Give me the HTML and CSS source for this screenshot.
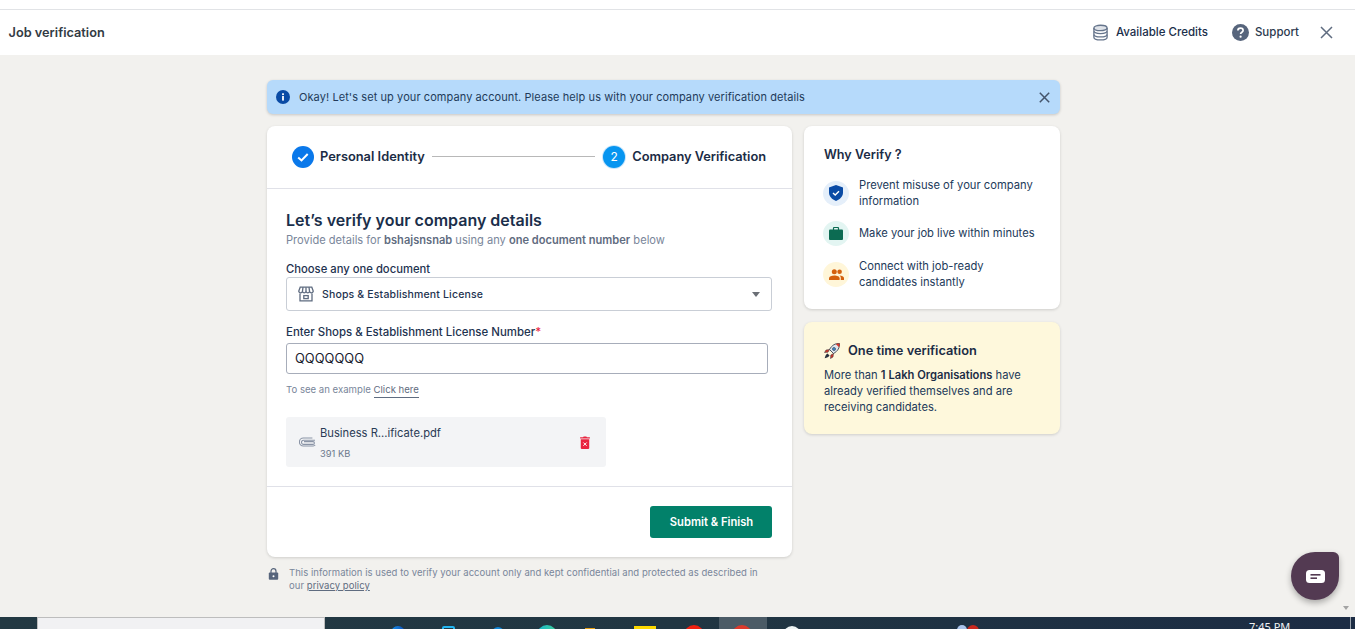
FILE: index.html
```html
<!DOCTYPE html>
<html lang="en">
<head>
<meta charset="utf-8">
<title>Job verification</title>
<link rel="stylesheet" href="styles.css">
</head>
<body>
<div class="page">
  <div class="top-strip"></div>
  <header class="header">
    <div class="header-title">Job verification</div>
    <div class="header-actions">
      <div class="header-action credits">
        <svg width="17" height="17" viewBox="0 0 18 18" fill="none" stroke="#66758c" stroke-width="1.4"><ellipse cx="9" cy="4.2" rx="7" ry="2.9" fill="#dfe3e9"/><path d="M2 4.2v3c0 1.6 3.1 2.9 7 2.9s7-1.3 7-2.9v-3"/><path d="M2 7.6v3.2c0 1.6 3.1 2.9 7 2.9s7-1.3 7-2.9V7.6"/><path d="M2 11v3c0 1.6 3.1 2.9 7 2.9s7-1.3 7-2.9v-3"/></svg>
        <span>Available Credits</span>
      </div>
      <div class="header-action support">
        <svg width="17" height="17" viewBox="0 0 17 17"><circle cx="8.5" cy="8.5" r="8.5" fill="#57657c"/><path d="M5.9 6.5c0-1.500 1.200-2.400 2.600-2.400s2.600.9 2.600 2.300c0 1.900-2.500 1.800-2.500 3.700" fill="none" stroke="#fff" stroke-width="1.7"/><circle cx="8.6" cy="12.7" r="1.100" fill="#fff"/></svg>
        <span>Support</span>
      </div>
      <svg class="header-close" width="13" height="13" viewBox="0 0 13 13" stroke="#5f6c80" stroke-width="1.5"><path d="M1 1l11 11M12 1L1 12"/></svg>
    </div>
  </header>

  <main class="main">
    <div class="alert">
      <svg width="14" height="14" viewBox="0 0 14 14"><circle cx="7" cy="7" r="7" fill="#0a4ba5"/><rect x="6.100" y="6" width="1.800" height="4.600" fill="#fff"/><rect x="6.100" y="3.300" width="1.800" height="1.800" fill="#fff"/></svg>
      <span class="alert-text">Okay! Let's set up your company account. Please help us with your company verification details</span>
      <svg class="alert-close" width="11" height="11" viewBox="0 0 11 11" stroke="#44546b" stroke-width="1.5"><path d="M.8.8l9.400 9.400M10.200.8L.8 10.200"/></svg>
    </div>

    <div class="columns">
      <div class="left-column">
        <section class="card form-card">
          <div class="stepper">
            <svg width="22" height="22" viewBox="0 0 22 22"><circle cx="11" cy="11" r="11" fill="#0a78ea"/><path d="M6.200 11.400l3.300 3 6.200-6.400" fill="none" stroke="#fff" stroke-width="2"/></svg>
            <span class="step-label first">Personal Identity</span>
            <span class="step-line"></span>
            <span class="step-number">2</span>
            <span class="step-label second">Company Verification</span>
          </div>

          <div class="form-body">
            <h1 class="form-title">Let’s verify your company details</h1>
            <p class="form-sub">Provide details for <b>bshajsnsnab</b> using any <b>one document number</b> below</p>

            <label class="field-label choose-label">Choose any one document</label>
            <div class="select">
              <svg width="16" height="16" viewBox="0 0 16 16" fill="none" stroke="#5f6c80" stroke-width="1.300"><path d="M2.200 1.200h11.600l1.500 4a2 2 0 0 1-3.700.6 2 2 0 0 1-3.600 0 2 2 0 0 1-3.600 0 2 2 0 0 1-3.700-.6z"/><path d="M5 1.200l-.6 4.600M8 1.200v4.600M11 1.200l.6 4.600"/><path d="M2 7.400v7.400h12V7.400"/><rect x="5.800" y="9.600" width="4.400" height="3"/></svg>
              <span class="select-value">Shops &amp; Establishment License</span>
              <span class="select-caret"></span>
            </div>

            <label class="field-label number-label">Enter Shops &amp; Establishment License Number<span class="required">*</span></label>
            <div class="input">QQQQQQQ</div>
            <p class="hint">To see an example <a class="hint-link">Click here</a></p>

            <div class="file">
              <svg width="17" height="10" viewBox="0 0 17 10" fill="none" stroke="#8a94a6" stroke-width="1.100"><path d="M16 3.200H4.600a2.100 2.100 0 0 0 0 4.200H14a1.400 1.400 0 0 0 0-2.800H5"/><path d="M13.400 1H4.400a3.900 3.900 0 0 0 0 8h9.800a2.800 2.800 0 0 0 2-1"/></svg>
              <div class="file-info">
                <div class="file-name">Business R...ificate.pdf</div>
                <div class="file-size">391 KB</div>
              </div>
              <svg class="file-delete" width="10" height="13" viewBox="0 0 9 12"><path d="M0 1.200h2.700L3.300.4h2.400l.6.8H9v1H0z" fill="#e9243f"/><path d="M.6 3h7.800v8a1 1 0 0 1-1 1H1.600a1 1 0 0 1-1-1z" fill="#e9243f"/><path d="M3 6l3 3M6 6L3 9" stroke="#fff" stroke-width=".9"/></svg>
            </div>
          </div>

          <div class="form-footer">
            <button class="submit" type="button">Submit &amp; Finish</button>
          </div>
        </section>

        <div class="privacy">
          <svg width="11" height="12" viewBox="0 0 11 12"><path d="M3 5V3.200a2.500 2.500 0 0 1 5 0V5" fill="none" stroke="#57657c" stroke-width="1.200"/><rect x=".8" y="4.600" width="9.400" height="7.200" rx="1" fill="#57657c"/><circle cx="5.500" cy="8.200" r="1" fill="#fff"/></svg>
          <p>This information is used to verify your account only and kept confidential and protected as described in our <a>privacy policy</a></p>
        </div>
      </div>

      <aside class="right-column">
        <section class="card why-card">
          <h2 class="why-title">Why Verify ?</h2>
          <div class="why-row">
            <span class="why-icon blue"><svg width="14" height="16" viewBox="0 0 14 16"><path d="M7 0l7 2.600v5c0 3.800-3 7-7 8.400-4-1.400-7-4.600-7-8.400v-5z" fill="#0a4ba5"/><path d="M4 8l2.200 2.100L10 6.200" fill="none" stroke="#fff" stroke-width="1.400"/></svg></span>
            <span>Prevent misuse of your company information</span>
          </div>
          <div class="why-row">
            <span class="why-icon green"><svg width="14" height="13" viewBox="0 0 14 13"><path d="M4.500 3V1.300A1 1 0 0 1 5.500.3h3a1 1 0 0 1 1 1V3" fill="none" stroke="#0c6b52" stroke-width="1.200"/><rect y="2.600" width="14" height="10.400" rx="1" fill="#0c6b52"/></svg></span>
            <span>Make your job live within minutes</span>
          </div>
          <div class="why-row">
            <span class="why-icon yellow"><svg width="15" height="11" viewBox="0 0 15 11" fill="#d4600e"><circle cx="5.300" cy="2.700" r="2.500"/><path d="M0 11V9.200C0 7.400 2.600 6.400 5.300 6.400s5.300 1 5.300 2.800V11z"/><circle cx="10.600" cy="2.700" r="2.300"/><path d="M11.800 11V9c0-1-.5-1.900-1.300-2.500 2.200 0 4.500.9 4.500 2.600V11z"/></svg></span>
            <span>Connect with job-ready candidates instantly</span>
          </div>
        </section>

        <section class="card once-card">
          <h2 class="once-title">
            <svg width="16" height="16" viewBox="0 0 16 16"><path d="M15.500.5c-4-.3-7.500 1.500-10 6l4 4c4.500-2.500 6.300-6 6-10z" fill="#dfe6ee" stroke="#26303d" stroke-width=".8"/><path d="M15.500.5c-1.500-.2-2.700 0-3.800.5l3.300 3.300c.5-1.100.7-2.300.5-3.800z" fill="#d8392b"/><circle cx="10" cy="6" r="1.500" fill="#3d8fd6" stroke="#26303d" stroke-width=".6"/><path d="M5.500 6.500L2 7l-1.500 2.500 3.500-.3zM9.500 10.500L9 14l-2.500 1.500.3-3.500z" fill="#d8392b" stroke="#26303d" stroke-width=".5"/><path d="M3.500 10.500c-1.500.8-2.300 2.500-2.800 4.800 2.300-.5 4-1.300 4.800-2.800z" fill="#26303d"/></svg>
            <span>One time verification</span>
          </h2>
          <p class="once-text">More than <b>1 Lakh Organisations</b> have already verified themselves and are receiving candidates.</p>
        </section>
      </aside>
    </div>
  </main>

  <button class="chat" type="button" aria-label="Chat">
    <svg width="19" height="13" viewBox="0 0 19 13"><rect width="19" height="13" rx="3.500" fill="#fff"/><rect x="4.500" y="4" width="10" height="1.600" fill="#533a52"/><rect x="4.500" y="7.400" width="6.500" height="1.600" fill="#533a52"/></svg>
  </button>
  <span class="scroll-arrow"></span>

  <footer class="taskbar">
    <span class="task-search"></span>
    <span class="task-icon t-edge"></span>
    <span class="task-icon t-store"></span>
    <span class="task-icon t-blue"></span>
    <span class="task-icon t-teal"></span>
    <span class="task-icon t-orange"></span>
    <span class="task-icon t-yellow"></span>
    <span class="task-icon t-red"></span>
    <span class="task-active"><span class="task-icon t-chrome"></span></span>
    <span class="task-icon t-white"></span>
    <span class="task-icon t-people"></span>
    <span class="task-clock">7:45 PM</span>
    <span class="task-edge"></span>
  </footer>
</div>
</body>
</html>
```

FILE: styles.css
```css
* { box-sizing: border-box; }
html, body { margin: 0; padding: 0; height: 100%; overflow: hidden; }
body { font-family: Inter, "Noto Sans", "Liberation Sans", sans-serif; color: #1b2c45; background: #f2f1ee; }
p, h1, h2 { margin: 0; }

.page { position: relative; width: 1355px; height: 629px; display: flex; flex-direction: column; overflow: hidden; }

.top-strip { height: 10px; background: #fff; border-bottom: 1px solid #e1e3e6; flex: none; }

.header { height: 45px; flex: none; background: #fff; display: flex; align-items: center; justify-content: space-between; padding: 0 22px 1px 8.5px; }
.header-title { font-size: 12.75px; font-weight: 600; color: #333b44; }
.header-actions { display: flex; align-items: center; }
.header-action { display: flex; align-items: center; font-size: 11.5px; font-weight: 500; color: #1b2f4b; }
.credits { gap: 7px; margin-right: 24px; }
.support { gap: 6px; margin-right: 21px; color: #2c3a4e; }

.main { flex: 1; min-height: 0; padding: 25px 0 0 267px; }

.alert { width: 793px; height: 34px; background: #b6dafb; border-radius: 6px; display: flex; align-items: center; padding: 0 10px 0 9px; box-shadow: 0 1px 3px rgba(0,0,0,.18); font-size: 11px; color: #223a5a; }
.alert-text { margin-left: 9px; flex: 1; letter-spacing: .08px; }

.columns { display: flex; align-items: flex-start; gap: 12px; margin-top: 12px; }
.left-column { width: 525px; }
.right-column { width: 256px; display: flex; flex-direction: column; gap: 13px; }

.card { background: #fff; border-radius: 8px; box-shadow: 0 1px 3px rgba(0,0,0,.15); }

.form-card { height: 431px; display: flex; flex-direction: column; }
.stepper { height: 63px; flex: none; border-bottom: 1px solid #e0e1e8; display: flex; align-items: center; padding: 0 26px 1px 25px; }
.step-label { font-size: 12.85px; font-weight: 600; color: #1b2c45; white-space: nowrap; }
.step-label.first { margin-left: 6px; }
.step-label.second { margin-left: 7px; letter-spacing: -.04px; }
.step-line { flex: 1; height: 1px; background: #b8b8b8; margin: 0 8px 0 7px; }
.step-number { width: 22px; height: 22px; border-radius: 50%; background: #0795f0; color: #fff; font-size: 12px; display: flex; align-items: center; justify-content: center; box-shadow: 0 0 0 1px #c8e5fb; }

.form-body { flex: 1; padding: 21px 20px 0 19px; border-bottom: 1px solid #e0e1e8; }
.form-title { font-size: 16px; line-height: 20px; font-weight: 600; color: #1b2f4b; }
.form-sub { font-size: 11.1px; line-height: 14px; margin-top: 3px; color: #79869a; }
.form-sub b { font-weight: 600; color: #5f6c80; }

.field-label { display: block; font-size: 11.45px; line-height: 14px; color: #1e3350; font-weight: 500; }
.choose-label { font-size: 11.25px; margin-top: 15px; }
.select { height: 34px; border: 1px solid #c9ced6; border-radius: 3px; display: flex; align-items: center; padding: 0 11px; margin-top: 1px; }
.select-value { margin-left: 8px; flex: 1; font-size: 10.5px; font-weight: 500; color: #1e3350; letter-spacing: .015em; }
.select-caret { width: 0; height: 0; border-left: 4.5px solid transparent; border-right: 4.5px solid transparent; border-top: 5px solid #6b6f76; }

.number-label { margin-top: 14px; }
.required { color: #e9243f; }
.input { width: 482px; height: 31px; border: 1px solid #a7adba; border-radius: 3px; margin-top: 4px; padding: 0 8px; display: flex; align-items: center; font-size: 12.9px; font-weight: 400; color: #17202e; }
.hint { font-size: 9.6px; line-height: 13px; color: #79869a; margin-top: 9px; }
.hint-link { color: #5f6c80; border-bottom: 1px solid #5f6c80; padding-bottom: 2px; }

.file { width: 320px; height: 50px; background: #f3f4f6; border-radius: 3px; margin-top: 21px; display: flex; align-items: center; padding: 0 16px 0 13px; }
.file-info { margin-left: 4px; flex: 1; padding-top: 2px; }
.file-name { font-size: 11.2px; line-height: 14px; color: #2a3b55; }
.file-size { font-size: 9.3px; line-height: 12px; margin-top: 8px; color: #6c788c; }

.form-footer { height: 70px; flex: none; display: flex; justify-content: flex-end; align-items: flex-start; padding: 19px 20px 0 0; }
.submit { width: 122px; height: 32px; border: 0; border-radius: 3px; background: #02816a; color: #fff; font-family: inherit; font-size: 11.2px; font-weight: 600; padding: 0 0 0 1px; }

.privacy { display: flex; gap: 10px; margin-top: 9px; padding-left: 1px; width: 500px; }
.privacy svg { flex: none; margin-top: 2px; }
.privacy p { font-size: 9.5px; line-height: 13px; color: #79869a; letter-spacing: .005em; }
.privacy a { color: #5f6c80; text-decoration: underline; }

.why-card { height: 183px; padding: 21px 22px 0 19px; font-size: 11.2px; line-height: 16px; color: #223a5a; }
.why-title { font-size: 12.6px; line-height: 16px; font-weight: 600; color: #1b2c45; margin-left: 1px; }
.why-row { display: flex; align-items: center; gap: 10px; min-height: 32px; margin-top: 8px; }
.why-title + .why-row { margin-top: 14px; }
.why-row:last-child { margin-top: 9px; }
.why-icon { width: 26px; height: 25px; border-radius: 50%; flex: none; display: flex; align-items: center; justify-content: center; }
.why-icon.blue { background: #e5effa; }
.why-icon.green { background: #e3f5f2; }
.why-icon.yellow { background: #fff6d9; }

.once-card { height: 112px; background: #fef8dc; padding: 21px 19px 0 20px; }
.once-title { display: flex; align-items: center; gap: 8px; font-size: 12.8px; line-height: 16px; font-weight: 600; color: #1b2c45; }
.once-text { font-size: 11.2px; line-height: 16px; margin-top: 8px; color: #223a5a; }
.once-text b { font-weight: 600; color: #1b2c45; }

.chat { position: absolute; left: 1291px; top: 552px; width: 48px; height: 48px; border: 0; padding: 0; background: #533a52; border-radius: 50% 12% 50% 50%; box-shadow: 0 3px 6px rgba(0,0,0,.3); display: flex; align-items: center; justify-content: center; }
.scroll-arrow { position: absolute; left: 1343px; top: 606px; width: 0; height: 0; border-left: 3.5px solid transparent; border-right: 3.5px solid transparent; border-top: 4px solid #a3a3a3; }

.taskbar { position: relative; height: 12px; flex: none; background: linear-gradient(90deg, #233943 0%, #213642 50%, #1c2c44 100%); overflow: hidden; }
.task-search { position: absolute; left: 37px; top: 0; width: 288px; height: 12px; background: #f1f1f3; border: 1px solid #bdbdbd; border-bottom: 0; }
.task-active { position: absolute; left: 719px; top: 0; width: 48px; height: 12px; background: #4b5b66; }
.task-icon { position: absolute; display: block; }
.t-edge { left: 391px; top: 9px; width: 14px; height: 14px; border-radius: 50%; background: linear-gradient(90deg, #1890e8, #0d4fb8); }
.t-store { left: 442px; top: 9px; width: 13px; height: 12px; border: 2px solid #22b5f0; border-radius: 2px; }
.t-blue { left: 492px; top: 10px; width: 12px; height: 12px; border-radius: 50%; background: #1187d8; }
.t-teal { left: 537px; top: 8px; width: 20px; height: 20px; border-radius: 50%; background: linear-gradient(90deg, #17b4cc, #3fcf98); }
.t-orange { left: 585px; top: 11px; width: 10px; height: 6px; background: #e8a012; }
.t-yellow { left: 634px; top: 9px; width: 22px; height: 12px; background: #fdd900; }
.t-red { left: 684px; top: 8px; width: 20px; height: 20px; border-radius: 50%; background: #f02010; }
.t-chrome { left: 13px; top: 8px; width: 20px; height: 20px; border-radius: 50%; background: #dc3a2c; }
.t-white { left: 783px; top: 9px; width: 18px; height: 18px; border-radius: 50%; background: #eef4f4; }
.t-people { left: 957px; top: 8px; width: 10px; height: 10px; border-radius: 50%; background: #a9c2ea; }
.t-people::after { content: ""; position: absolute; left: 10px; top: 0; width: 12px; height: 12px; border-radius: 50%; background: #c8281e; }
.task-clock { position: absolute; left: 1249px; top: 3px; font-size: 11px; line-height: 13px; color: #f0f2f4; font-family: "Noto Sans", sans-serif; }
.task-edge { position: absolute; left: 1350px; top: 0; width: 1px; height: 12px; background: #9aa3ad; }
```
